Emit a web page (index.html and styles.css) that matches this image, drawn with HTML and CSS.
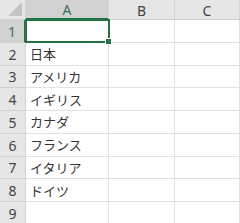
FILE: index.html
```html
<!DOCTYPE html>
<html lang="ja">
<head>
<meta charset="utf-8">
<link rel="stylesheet" href="styles.css">
</head>
<body>
<div class="sheet">
  <div class="corner"><div class="tri"></div></div>
  <div class="colh sel">A</div>
  <div class="colh">B</div>
  <div class="colh">C</div>

  <div class="rowh sel">1</div>
  <div class="cell active"><div class="selbox"><div class="handle"></div></div></div>
  <div class="cell"></div><div class="cell"></div>

  <div class="rowh">2</div><div class="cell">日本</div><div class="cell"></div><div class="cell"></div>
  <div class="rowh">3</div><div class="cell">アメリカ</div><div class="cell"></div><div class="cell"></div>
  <div class="rowh">4</div><div class="cell">イギリス</div><div class="cell"></div><div class="cell"></div>
  <div class="rowh">5</div><div class="cell">カナダ</div><div class="cell"></div><div class="cell"></div>
  <div class="rowh">6</div><div class="cell">フランス</div><div class="cell"></div><div class="cell"></div>
  <div class="rowh">7</div><div class="cell">イタリア</div><div class="cell"></div><div class="cell"></div>
  <div class="rowh">8</div><div class="cell">ドイツ</div><div class="cell"></div><div class="cell"></div>
  <div class="rowh">9</div><div class="cell"></div><div class="cell"></div><div class="cell"></div>
</div>
</body>
</html>
```
FILE: styles.css
```css
html, body {
  margin: 0;
  padding: 0;
  background: #fff;
}
body {
  width: 240px;
  height: 223px;
  overflow: hidden;
  font-family: "Noto Sans CJK JP", "Noto Sans", sans-serif;
}
.sheet {
  display: grid;
  grid-template-columns: 26px 83px 66px 65px;
  grid-template-rows: 20px repeat(9, 22.75px);
}
.corner {
  background: #e6e6e6;
  border-right: 1px solid #d4d4d4;
  border-bottom: 1px solid #d4d4d4;
  box-sizing: border-box;
  position: relative;
}
.tri {
  position: absolute;
  right: 3px;
  bottom: 3px;
  width: 0;
  height: 0;
  border-left: 14px solid transparent;
  border-bottom: 14px solid #c4c4c4;
}
.colh {
  background: #e6e6e6;
  border-right: 1px solid #d4d4d4;
  border-bottom: 1px solid #cfcfcf;
  box-sizing: border-box;
  display: flex;
  align-items: center;
  justify-content: center;
  font-family: "Noto Sans", sans-serif;
  font-size: 14px;
  color: #444;
  padding-top: 1px;
}
.colh.sel {
  background: #d2d2d2;
  color: #3c6e53;
  border-bottom: 2px solid #217346;
}
.rowh {
  background: #e6e6e6;
  border-right: 1px solid #d4d4d4;
  border-bottom: 1px solid #d0d0d0;
  box-sizing: border-box;
  display: flex;
  align-items: center;
  justify-content: center;
  font-family: "Noto Sans", sans-serif;
  font-size: 14px;
  color: #444;
  padding-top: 1px;
}
.rowh.sel {
  background: #d2d2d2;
  color: #3c6e53;
  border-right: 2px solid #217346;
}
.cell {
  border-right: 1px solid #e1e1e1;
  border-bottom: 1px solid #e1e1e1;
  box-sizing: border-box;
  display: flex;
  align-items: center;
  padding-left: 4px;
  font-size: 13px;
  color: #333;
  white-space: nowrap;
}
.cell.active {
  position: relative;
}
.selbox {
  position: absolute;
  left: -1px;
  top: -1px;
  right: -2px;
  bottom: -1px;
  border: 2px solid #217346;
}
.handle {
  position: absolute;
  right: -4px;
  bottom: -4px;
  width: 5px;
  height: 5px;
  background: #217346;
  border: 1px solid #fff;
}
```
